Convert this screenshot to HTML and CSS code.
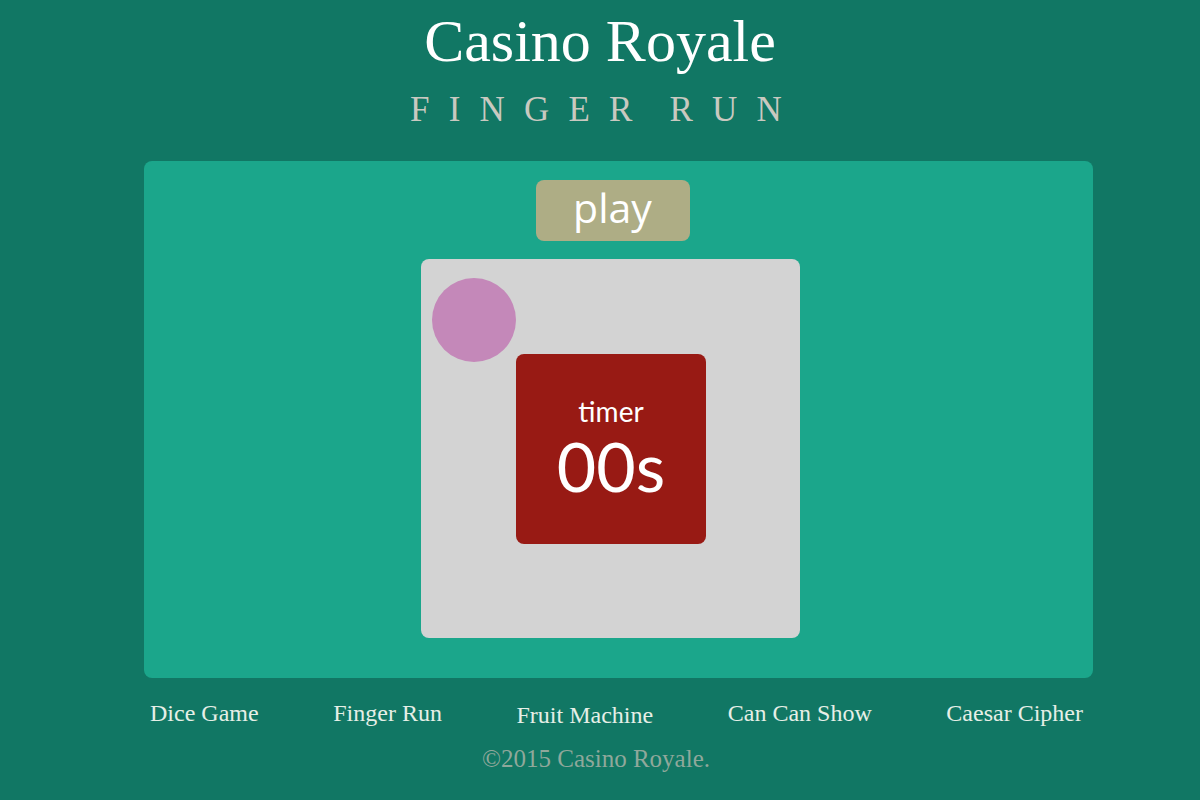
FILE: index.html
```html
<!DOCTYPE html>
<html lang="en">
<head>
<meta charset="utf-8">
<title>Casino Royale - Finger Run</title>
<link rel="stylesheet" href="styles.css">
</head>
<body>
<header class="site-header">
  <h1 class="site-title">Casino Royale</h1>
  <h2 class="page-title">FINGER RUN</h2>
</header>
<main class="game-panel">
  <button class="play-btn" type="button">play</button>
  <div class="board">
    <div class="finger"></div>
    <div class="timer-box">
      <span class="timer-label">timer</span>
      <span class="timer-value">00s</span>
    </div>
  </div>
</main>
<nav class="game-nav">
  <a class="nav-link" href="#">Dice Game</a>
  <a class="nav-link" href="#">Finger Run</a>
  <a class="nav-link nav-low" href="#">Fruit Machine</a>
  <a class="nav-link" href="#">Can Can Show</a>
  <a class="nav-link" href="#">Caesar Cipher</a>
</nav>
<footer class="copyright">©2015 Casino Royale.</footer>
</body>
</html>
```
FILE: styles.css
```css
html, body {
  margin: 0;
  padding: 0;
}
body {
  background: #117764;
  font-family: "Liberation Serif", "Times New Roman", serif;
  width: 1200px;
  height: 800px;
  overflow: hidden;
}
.site-header {
  padding-top: 7px;
  display: flex;
  flex-direction: column;
  align-items: center;
}
.site-title {
  margin: 0;
  font-weight: normal;
  font-size: 60px;
  line-height: 69px;
  color: #ffffff;
}
.page-title {
  margin: 14px 0 0 0;
  font-weight: normal;
  font-size: 35px;
  line-height: 40px;
  letter-spacing: 19.2px;
  word-spacing: -10px;
  color: #c9c9c0;
  padding-left: 11px;
}
.game-panel {
  margin: 31px 0 0 144px;
  width: 949px;
  box-sizing: border-box;
  padding: 19px 12px 40px 0;
  background: #1ba68b;
  border-radius: 8px;
  display: flex;
  flex-direction: column;
  align-items: center;
}
.play-btn {
  width: 154px;
  height: 61px;
  border: none;
  border-radius: 8px;
  background: #aead85;
  color: #ffffff;
  font-family: "Open Sans", sans-serif;
  font-size: 41px;
  line-height: 1;
  padding: 0 0 6px 0;
  display: flex;
  align-items: center;
  justify-content: center;
}
.board {
  position: relative;
  margin: 18px 4px 0 0;
  width: 379px;
  height: 379px;
  background: #d3d3d3;
  border-radius: 8px;
  display: flex;
  align-items: center;
  justify-content: center;
}
.finger {
  position: absolute;
  left: 11px;
  top: 19px;
  width: 84px;
  height: 84px;
  border-radius: 50%;
  background: #c488b9;
}
.timer-box {
  width: 190px;
  height: 190px;
  background: #981a14;
  border-radius: 8px;
  display: flex;
  flex-direction: column;
  align-items: center;
  justify-content: center;
  color: #ffffff;
  font-family: "Lato", "Open Sans", sans-serif;
  margin-left: 1px;
}
.timer-label {
  font-size: 28px;
  line-height: 28px;
}
.timer-value {
  margin-top: 7px;
  font-size: 68px;
  line-height: 68px;
}
.game-nav {
  margin: 22px 0 0 150px;
  width: 933px;
  display: flex;
  justify-content: space-between;
}
.nav-link {
  font-size: 24px;
  line-height: 26px;
  color: #e6efe7;
  text-decoration: none;
}
.nav-low {
  margin-top: 2px;
}
.copyright {
  margin-top: 17px;
  padding-right: 8px;
  text-align: center;
  font-size: 25px;
  line-height: 28px;
  color: #8fa89b;
}
```
